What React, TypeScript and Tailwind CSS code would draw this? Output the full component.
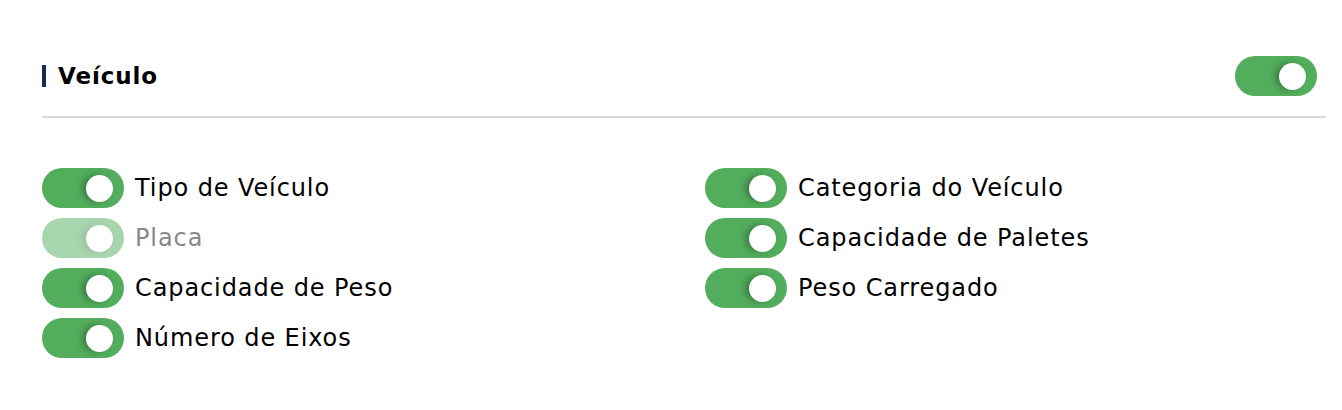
import React, { useState } from 'react';

interface ToggleProps {
  checked: boolean;
  disabled?: boolean;
  onChange?: (v: boolean) => void;
}

const Toggle: React.FC<ToggleProps> = ({ checked, disabled, onChange }) => {
  return (
    <button
      type="button"
      role="switch"
      aria-checked={checked}
      disabled={disabled}
      onClick={() => onChange && onChange(!checked)}
      className={`relative shrink-0 w-[82px] h-[40px] rounded-full ${checked ? 'bg-[#52ad5d]' : 'bg-gray-300'} ${disabled ? 'opacity-50 cursor-not-allowed' : 'cursor-pointer'}`}
    >
      <span
        className={`absolute top-[7px] w-[27px] h-[27px] rounded-full bg-white shadow-[-4px_0_6px_rgba(0,0,0,0.28)] ${checked ? 'right-[11px]' : 'left-[11px]'}`}
      />
    </button>
  );
};

const fields = [
  { id: 'tipo', label: 'Tipo de Veículo', disabled: false },
  { id: 'categoria', label: 'Categoria do Veículo', disabled: false },
  { id: 'placa', label: 'Placa', disabled: true },
  { id: 'paletes', label: 'Capacidade de Paletes', disabled: false },
  { id: 'peso', label: 'Capacidade de Peso', disabled: false },
  { id: 'carregado', label: 'Peso Carregado', disabled: false },
  { id: 'eixos', label: 'Número de Eixos', disabled: false },
];

export default function App() {
  const [enabled, setEnabled] = useState(true);
  const [values, setValues] = useState<Record<string, boolean>>(
    Object.fromEntries(fields.map((f) => [f.id, true]))
  );

  return (
    <div
      className="min-h-[410px] bg-white pt-[56px] pl-[42px] pr-[16px]"
      style={{ fontFamily: "'DejaVu Sans', Inter, sans-serif" }}
    >
      <div className="flex items-center justify-between pr-[9px]">
        <div className="flex items-center gap-[12px]">
          <span className="w-[4px] h-[22px] bg-[#1b2a52]" />
          <h2 className="text-[23px] font-bold text-black leading-none tracking-[0.9px]">Veículo</h2>
        </div>
        <Toggle checked={enabled} onChange={setEnabled} />
      </div>

      <div className="mt-[20px] h-[2px] bg-[#d8d8d8]" />

      <div className="mt-[50px] grid grid-cols-2 gap-x-[42px] gap-y-[10px]">
        {fields.map((f) => (
          <div key={f.id} className="flex items-center gap-[11px]">
            <Toggle
              checked={values[f.id]}
              disabled={f.disabled}
              onChange={(v) => setValues({ ...values, [f.id]: v })}
            />
            <span
              className={`text-[24px] leading-none tracking-[0.9px] ${f.disabled ? 'text-[#888888]' : 'text-black'}`}
            >
              {f.label}
            </span>
          </div>
        ))}
      </div>
    </div>
  );
}
